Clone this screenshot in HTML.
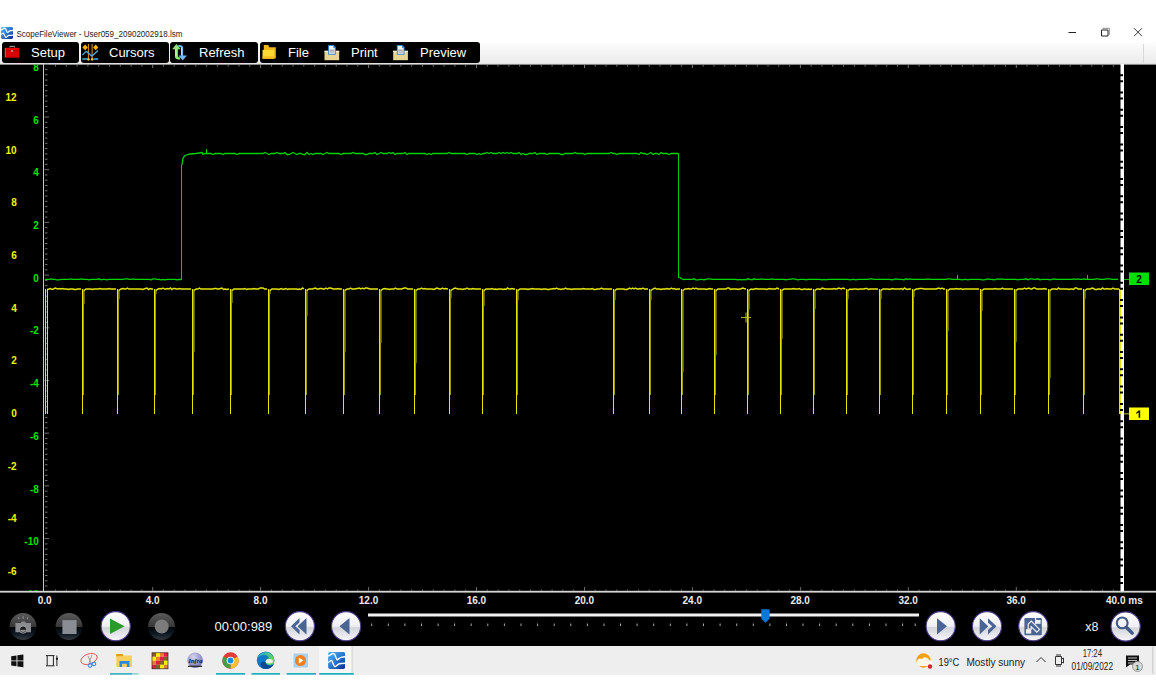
<!DOCTYPE html>
<html><head><meta charset="utf-8">
<style>
*{margin:0;padding:0;box-sizing:border-box}
html,body{width:1156px;height:700px;overflow:hidden;background:#fff;font-family:"Liberation Sans",sans-serif}
.abs{position:absolute}
#title{left:16px;top:28px;font-size:9px;color:#222;white-space:nowrap}
#tbar{left:0;top:41px;width:1156px;height:23px;background:linear-gradient(#ffffff,#f6f6f6 40%,#ebebeb)}
.btn{position:absolute;top:42px;height:21px;background:#000;border-radius:3px}
.bt{position:absolute;top:45px;font-size:13px;color:#fff;white-space:nowrap;line-height:15px}
#black{left:0;top:64px;width:1156px;height:582px;background:#000}
.yl{position:absolute;font-size:10px;font-weight:bold;line-height:10px;text-align:right;width:30px}
.g{color:#00e000}
.y{color:#f0f000}
.xl{position:absolute;top:595px;font-size:10px;font-weight:bold;color:#e8e8e8;line-height:10px;width:40px;text-align:center}
#taskbar{left:0;top:646px;width:1156px;height:29px;background:#eeeeee}
.ul{position:absolute;top:673px;height:2px;background:#1aa5b8}
</style></head><body>
<!-- title bar -->
<svg class="abs" style="left:1px;top:27px" width="12" height="12" viewBox="0 0 17 17">
<defs><linearGradient id="ig" x1="0" y1="0" x2="1" y2="1"><stop offset="0" stop-color="#58b8f4"/><stop offset="0.5" stop-color="#2a78d0"/><stop offset="1" stop-color="#0a2a90"/></linearGradient></defs>
<rect x="0" y="0" width="17" height="17" rx="2" fill="url(#ig)"/>
<path d="M0 4.1C2 3.8 4 1 5.8 1.7S8 7.8 9 7.8S12 5.3 13.6 5.2S17 4.8 17 4.8M0 10.5C1.5 10 2.5 8.3 3.4 8.5S5.5 14.8 6.8 14.8S9.5 12 11.4 11.9S17 11.4 17 11.4" fill="none" stroke="#fff" stroke-width="1.7"/>
</svg>
<svg class="abs" style="left:0;top:20px" width="300" height="22" viewBox="0 20 300 22"><text x="16.4" y="37.1" font-size="9.2" fill="#1a1a1a" font-family="Liberation Sans" textLength="166" lengthAdjust="spacingAndGlyphs">ScopeFileViewer - User059_20902002918.lsm</text></svg>
<svg class="abs" style="left:1066px;top:26px" width="80" height="14" viewBox="0 0 80 14">
<path d="M2.5 6.5h7.5" stroke="#222" stroke-width="1"/>
<path d="M35.5 4h6.5v6h-6.5z" fill="none" stroke="#222" stroke-width="1"/>
<path d="M37 3.8v-1.5h6.3v6.2h-1.3" fill="none" stroke="#888" stroke-width="1"/>
<path d="M68 2.2l8 8M76 2.2l-8 8" stroke="#222" stroke-width="0.9"/>
</svg>
<div id="tbar" class="abs"></div>
<div class="abs" style="left:1143px;top:44px;width:1px;height:20px;background:#d8d8d8"></div>
<!-- toolbar buttons -->
<div class="btn" style="left:2px;width:77px"></div>
<div class="btn" style="left:81px;width:88px"></div>
<div class="btn" style="left:170px;width:88px"></div>
<div class="btn" style="left:260px;width:220px"></div>
<div class="bt" style="left:31px">Setup</div>
<div class="bt" style="left:109px">Cursors</div>
<div class="bt" style="left:199px">Refresh</div>
<div class="bt" style="left:288px">File</div>
<div class="bt" style="left:351px">Print</div>
<div class="bt" style="left:420px">Preview</div>
<!-- toolbar icons -->
<svg class="abs" style="left:0;top:41px" width="480" height="23" viewBox="0 41 480 23">
<!-- toolbox -->
<path d="M10 47.6v-1.2h4.6v1.2" fill="none" stroke="#a8a8a8" stroke-width="1"/>
<path d="M5 47.8h14v2.6h-14z" fill="#f00000"/>
<path d="M5 50.3h14v7.4h-14z" fill="#d80000"/>
<path d="M5.2 48.2v9" stroke="#ff8080" stroke-width="0.7"/>
<circle cx="12" cy="51" r="0.9" fill="#bbb"/>
<!-- cursors -->
<path d="M88.4 44v16.5M92.1 44v16.5" stroke="#d88a10" stroke-width="1.1"/>
<path d="M85.2 44.6l2.6 2.8l-2.6 2.8l-2.8-2.8zM95.7 44.6l2.6 2.8l-2.6 2.8l-2.6-2.8z" fill="#ffb010"/>
<path d="M82.3 55.1L86.2 51.3L92 56.1L98 50.6" fill="none" stroke="#48b0e8" stroke-width="1.3"/>
<path d="M82.3 59h4.8M94.1 59h4.1" stroke="#48b0e8" stroke-width="1.6"/>
<circle cx="88.4" cy="59.2" r="1.3" fill="#ffc020"/><circle cx="92.2" cy="59.2" r="1.3" fill="#ffc020"/>
<!-- refresh -->
<path d="M176.4 44.1l-4.3 5.2h2.9v7.5c0 1.8 1.6 2.8 3.5 2.8h1.6v-2.2c-1.3 0-2.2-0.4-2.2-1.6v-6.5h2.9z" fill="#8ae870"/>
<path d="M175.9 49.3v7" stroke="#d8ffc8" stroke-width="0.9"/>
<path d="M178.3 44.9h1.4c1.9 0 3.4 1 3.4 2.8v7.7h3.8l-4.2 5.2l-4.2-5.2h2.7v-6.6c0-1.3-0.6-1.7-2.9-1.7z" fill="#70b8f8"/>
<path d="M181.6 48v7" stroke="#d8ecff" stroke-width="0.9"/>
<!-- folder -->
<path d="M263.8 45.1h4.5l1 2.1h6.5v11.3h-12z" fill="#f0b818"/>
<path d="M262.5 49.9h11.6v8.8h-11.6z" fill="#ffd830"/>
<path d="M262.5 56.5h11.6v2.2h-11.6z" fill="#f8b820"/>
<!-- print -->
<g transform="translate(0.0 0)">
<path d="M324.5 50.8h14.7v9.4h-14.7z" fill="#e6d594"/>
<path d="M324.5 50.8h14.7v1.2h-14.7z" fill="#f6f0d8"/>
<path d="M328.1 45.1h5.6l2.1 2.1v7.5h-7.7z" fill="#3a8ad8"/>
<path d="M329.1 46.1h4.2v2h1.5v5.6h-5.7z" fill="#eef2f6"/>
<path d="M329.6 50.2h4.6M329.6 52h4.6" stroke="#777" stroke-width="0.8"/>
</g>
<!-- preview -->
<g transform="translate(68.7 0)">
<path d="M324.5 50.8h14.7v9.4h-14.7z" fill="#e6d594"/>
<path d="M324.5 50.8h14.7v1.2h-14.7z" fill="#f6f0d8"/>
<path d="M328.1 45.1h5.6l2.1 2.1v7.5h-7.7z" fill="#3a8ad8"/>
<path d="M329.1 46.1h4.2v2h1.5v5.6h-5.7z" fill="#eef2f6"/>
<path d="M329.6 50.2h4.6M329.6 52h4.6" stroke="#777" stroke-width="0.8"/>
</g>
</svg>
<!-- main black -->
<div id="black" class="abs"></div>
<svg class="abs" style="left:0;top:0" width="1156" height="700" viewBox="0 0 1156 700">
<rect x="0" y="63" width="1156" height="1.6" fill="#e2e2e2"/>
<rect x="43" y="64" width="1" height="528" fill="#c8c8c8" shape-rendering="crispEdges"/>
<rect x="0" y="590.8" width="1156" height="1.8" fill="#d6d6d6"/>
<rect x="1120.5" y="64" width="3.5" height="527" fill="#fff"/>
<path d="M44.5 64.3h4.5 M45 69.6h2.5 M45 74.8h2.5 M45 80.1h2.5 M45 85.4h2.5 M45 90.7h2.5 M45 95.9h2.5 M45 101.2h2.5 M45 106.5h2.5 M45 111.7h2.5 M44.5 117.0h4.5 M45 122.3h2.5 M45 127.5h2.5 M45 132.8h2.5 M45 138.1h2.5 M45 143.3h2.5 M45 148.6h2.5 M45 153.9h2.5 M45 159.2h2.5 M45 164.4h2.5 M44.5 169.7h4.5 M45 175.0h2.5 M45 180.2h2.5 M45 185.5h2.5 M45 190.8h2.5 M45 196.1h2.5 M45 201.3h2.5 M45 206.6h2.5 M45 211.9h2.5 M45 217.1h2.5 M44.5 222.4h4.5 M45 227.7h2.5 M45 232.9h2.5 M45 238.2h2.5 M45 243.5h2.5 M45 248.8h2.5 M45 254.0h2.5 M45 259.3h2.5 M45 264.6h2.5 M45 269.8h2.5 M44.5 275.1h4.5 M45 280.4h2.5 M45 285.6h2.5 M45 290.9h2.5 M45 296.2h2.5 M45 301.4h2.5 M45 306.7h2.5 M45 312.0h2.5 M45 317.3h2.5 M45 322.5h2.5 M44.5 327.8h4.5 M45 333.1h2.5 M45 338.3h2.5 M45 343.6h2.5 M45 348.9h2.5 M45 354.2h2.5 M45 359.4h2.5 M45 364.7h2.5 M45 370.0h2.5 M45 375.2h2.5 M44.5 380.5h4.5 M45 385.8h2.5 M45 391.0h2.5 M45 396.3h2.5 M45 401.6h2.5 M45 406.9h2.5 M45 412.1h2.5 M45 417.4h2.5 M45 422.7h2.5 M45 427.9h2.5 M44.5 433.2h4.5 M45 438.5h2.5 M45 443.7h2.5 M45 449.0h2.5 M45 454.3h2.5 M45 459.6h2.5 M45 464.8h2.5 M45 470.1h2.5 M45 475.4h2.5 M45 480.6h2.5 M44.5 485.9h4.5 M45 491.2h2.5 M45 496.4h2.5 M45 501.7h2.5 M45 507.0h2.5 M45 512.2h2.5 M45 517.5h2.5 M45 522.8h2.5 M45 528.1h2.5 M45 533.3h2.5 M44.5 538.6h4.5 M45 543.9h2.5 M45 549.1h2.5 M45 554.4h2.5 M45 559.7h2.5 M45 564.9h2.5 M45 570.2h2.5 M45 575.5h2.5 M45 580.8h2.5 M45 586.0h2.5" stroke="#707070" stroke-width="1"/>
<path d="M55.5 65v1.5 M66.3 65v1.5 M77.1 65v1.5 M87.9 65v1.5 M98.7 65v1.5 M109.5 65v1.5 M120.3 65v1.5 M131.1 65v1.5 M141.9 65v1.5 M152.7 65v3 M163.4 65v1.5 M174.2 65v1.5 M185.0 65v1.5 M195.8 65v1.5 M206.6 65v1.5 M217.4 65v1.5 M228.2 65v1.5 M239.0 65v1.5 M249.8 65v1.5 M260.6 65v3 M271.4 65v1.5 M282.2 65v1.5 M293.0 65v1.5 M303.8 65v1.5 M314.6 65v1.5 M325.4 65v1.5 M336.2 65v1.5 M347.0 65v1.5 M357.8 65v1.5 M368.6 65v3 M379.3 65v1.5 M390.1 65v1.5 M400.9 65v1.5 M411.7 65v1.5 M422.5 65v1.5 M433.3 65v1.5 M444.1 65v1.5 M454.9 65v1.5 M465.7 65v1.5 M476.5 65v3 M487.3 65v1.5 M498.1 65v1.5 M508.9 65v1.5 M519.7 65v1.5 M530.5 65v1.5 M541.3 65v1.5 M552.1 65v1.5 M562.9 65v1.5 M573.7 65v1.5 M584.5 65v3 M595.2 65v1.5 M606.0 65v1.5 M616.8 65v1.5 M627.6 65v1.5 M638.4 65v1.5 M649.2 65v1.5 M660.0 65v1.5 M670.8 65v1.5 M681.6 65v1.5 M692.4 65v3 M703.2 65v1.5 M714.0 65v1.5 M724.8 65v1.5 M735.6 65v1.5 M746.4 65v1.5 M757.2 65v1.5 M768.0 65v1.5 M778.8 65v1.5 M789.6 65v1.5 M800.4 65v3 M811.1 65v1.5 M821.9 65v1.5 M832.7 65v1.5 M843.5 65v1.5 M854.3 65v1.5 M865.1 65v1.5 M875.9 65v1.5 M886.7 65v1.5 M897.5 65v1.5 M908.3 65v3 M919.1 65v1.5 M929.9 65v1.5 M940.7 65v1.5 M951.5 65v1.5 M962.3 65v1.5 M973.1 65v1.5 M983.9 65v1.5 M994.7 65v1.5 M1005.5 65v1.5 M1016.3 65v3 M1027.0 65v1.5 M1037.8 65v1.5 M1048.6 65v1.5 M1059.4 65v1.5 M1070.2 65v1.5 M1081.0 65v1.5 M1091.8 65v1.5 M1102.6 65v1.5 M1113.4 65v1.5" stroke="#777" stroke-width="1"/>
<path d="M55.5 591v-1.5 M66.3 591v-1.5 M77.1 591v-1.5 M87.9 591v-1.5 M98.7 591v-1.5 M109.5 591v-1.5 M120.3 591v-1.5 M131.1 591v-1.5 M141.9 591v-1.5 M152.7 591v-4 M163.4 591v-1.5 M174.2 591v-1.5 M185.0 591v-1.5 M195.8 591v-1.5 M206.6 591v-1.5 M217.4 591v-1.5 M228.2 591v-1.5 M239.0 591v-1.5 M249.8 591v-1.5 M260.6 591v-4 M271.4 591v-1.5 M282.2 591v-1.5 M293.0 591v-1.5 M303.8 591v-1.5 M314.6 591v-1.5 M325.4 591v-1.5 M336.2 591v-1.5 M347.0 591v-1.5 M357.8 591v-1.5 M368.6 591v-4 M379.3 591v-1.5 M390.1 591v-1.5 M400.9 591v-1.5 M411.7 591v-1.5 M422.5 591v-1.5 M433.3 591v-1.5 M444.1 591v-1.5 M454.9 591v-1.5 M465.7 591v-1.5 M476.5 591v-4 M487.3 591v-1.5 M498.1 591v-1.5 M508.9 591v-1.5 M519.7 591v-1.5 M530.5 591v-1.5 M541.3 591v-1.5 M552.1 591v-1.5 M562.9 591v-1.5 M573.7 591v-1.5 M584.5 591v-4 M595.2 591v-1.5 M606.0 591v-1.5 M616.8 591v-1.5 M627.6 591v-1.5 M638.4 591v-1.5 M649.2 591v-1.5 M660.0 591v-1.5 M670.8 591v-1.5 M681.6 591v-1.5 M692.4 591v-4 M703.2 591v-1.5 M714.0 591v-1.5 M724.8 591v-1.5 M735.6 591v-1.5 M746.4 591v-1.5 M757.2 591v-1.5 M768.0 591v-1.5 M778.8 591v-1.5 M789.6 591v-1.5 M800.4 591v-4 M811.1 591v-1.5 M821.9 591v-1.5 M832.7 591v-1.5 M843.5 591v-1.5 M854.3 591v-1.5 M865.1 591v-1.5 M875.9 591v-1.5 M886.7 591v-1.5 M897.5 591v-1.5 M908.3 591v-4 M919.1 591v-1.5 M929.9 591v-1.5 M940.7 591v-1.5 M951.5 591v-1.5 M962.3 591v-1.5 M973.1 591v-1.5 M983.9 591v-1.5 M994.7 591v-1.5 M1005.5 591v-1.5 M1016.3 591v-4 M1027.0 591v-1.5 M1037.8 591v-1.5 M1048.6 591v-1.5 M1059.4 591v-1.5 M1070.2 591v-1.5 M1081.0 591v-1.5 M1091.8 591v-1.5 M1102.6 591v-1.5 M1113.4 591v-1.5" stroke="#6a6a6a" stroke-width="1"/>
<path d="M47 289.5L49 289.0L50.5 288.5L52.0 289.5L53.5 289.0L55.0 288.0L56.5 288.5L58.0 289.0L59.5 288.5L61.0 289.0L62.5 288.5L64.0 289.0L65.5 289.0L67.0 289.0L68.5 289.5L70.0 289.0L71.5 289.0L73.0 289.0L74.5 289.5L76.0 289.5L77.5 289.0L79.0 289.0L81 289.0M84 290.5L86 289.0L88 289.0L89.5 289.0L91.0 289.0L92.5 289.5L94.0 289.0L95.5 289.0L97.0 289.0L98.5 289.0L100.0 288.5L101.5 289.0L103.0 289.0L104.5 289.0L106.0 289.0L107.5 289.0L109.0 288.5L110.5 289.0L112.0 289.0L113.5 289.0L116 289.0M119 290.5L121 289.0L123 288.5L124.5 289.0L126.0 289.0L127.5 288.0L129.0 289.0L130.5 289.0L132.0 289.0L133.5 289.0L135.0 289.0L136.5 289.0L138.0 289.0L139.5 289.0L141.0 289.0L142.5 289.5L144.0 289.0L145.5 288.5L147.0 288.0L148.5 289.5L150.0 288.5L151.5 289.0L153 289.0M156 290.5L158 289.0L160 288.5L161.5 289.0L163.0 288.0L164.5 289.0L166.0 289.0L167.5 288.5L169.0 289.0L170.5 288.0L172.0 289.5L173.5 288.5L175.0 288.5L176.5 289.0L178.0 289.0L179.5 288.5L181.0 289.0L182.5 289.0L184.0 289.0L185.5 289.0L187.0 289.0L188.5 289.0L191 289.0M194 290.5L196 289.0L198 289.0L199.5 288.0L201.0 289.0L202.5 289.0L204.0 289.0L205.5 289.0L207.0 289.0L208.5 289.0L210.0 289.0L211.5 289.0L213.0 289.0L214.5 288.5L216.0 288.5L217.5 289.0L219.0 289.0L220.5 288.5L222.0 288.0L223.5 289.5L225.0 289.0L226.5 289.5L229 289.0M232 290.5L234 289.0L236 289.0L237.5 289.0L239.0 289.0L240.5 289.0L242.0 289.0L243.5 289.0L245.0 288.5L246.5 289.5L248.0 289.0L249.5 289.0L251.0 289.0L252.5 289.0L254.0 288.5L255.5 289.0L257.0 289.0L258.5 289.0L260.0 288.0L261.5 288.0L263.0 288.0L264.5 289.0L267 289.0M270 290.5L272 289.0L274 289.0L275.5 289.0L277.0 289.0L278.5 289.5L280.0 289.0L281.5 288.5L283.0 289.5L284.5 289.0L286.0 288.5L287.5 289.5L289.0 289.0L290.5 289.0L292.0 289.0L293.5 289.0L295.0 289.0L296.5 289.0L298.0 289.5L299.5 289.0L301.0 289.5L302.5 288.0L304 289.0M307 290.5L309 289.0L311 289.0L312.5 289.0L314.0 288.5L315.5 288.0L317.0 289.0L318.5 289.0L320.0 288.5L321.5 288.5L323.0 289.0L324.5 289.0L326.0 288.0L327.5 289.0L329.0 288.0L330.5 288.0L332.0 288.5L333.5 289.0L335.0 289.0L336.5 289.0L338.0 288.5L339.5 289.0L342 289.0M345 290.5L347 289.0L349 289.0L350.5 288.0L352.0 289.0L353.5 289.0L355.0 289.0L356.5 288.5L358.0 288.5L359.5 288.0L361.0 289.0L362.5 288.0L364.0 289.0L365.5 288.0L367.0 288.0L368.5 288.5L370.0 289.0L371.5 289.0L373.0 289.0L374.5 289.0L376.0 289.0L378 289.0M381 290.5L383 289.0L385 288.5L386.5 289.0L388.0 289.0L389.5 289.5L391.0 289.0L392.5 289.0L394.0 289.0L395.5 288.0L397.0 289.0L398.5 289.0L400.0 289.0L401.5 289.0L403.0 288.5L404.5 288.0L406.0 288.0L407.5 289.0L409.0 289.0L410.5 289.0L413 289.0M416 290.5L418 289.0L420 289.0L421.5 288.0L423.0 289.0L424.5 288.5L426.0 289.0L427.5 289.0L429.0 289.0L430.5 289.0L432.0 289.0L433.5 289.5L435.0 289.0L436.5 288.0L438.0 288.5L439.5 289.0L441.0 289.0L442.5 288.0L444.0 289.0L445.5 288.5L448 289.0M451 290.5L453 289.0L455 288.0L456.5 288.5L458.0 289.0L459.5 289.0L461.0 289.0L462.5 289.5L464.0 289.0L465.5 289.0L467.0 288.0L468.5 289.0L470.0 289.0L471.5 289.0L473.0 288.5L474.5 289.0L476.0 289.0L477.5 289.0L479.0 289.0L481 289.0M484 290.5L486 289.0L488 289.0L489.5 289.0L491.0 289.0L492.5 288.5L494.0 289.5L495.5 289.0L497.0 289.5L498.5 289.0L500.0 289.0L501.5 289.0L503.0 289.5L504.5 289.0L506.0 289.5L507.5 288.0L509.0 289.0L510.5 289.0L512.0 288.5L513.5 289.0L515 289.0M518 290.5L520 289.0L522 289.0L523.5 289.0L525.0 289.0L526.5 289.0L528.0 289.5L529.5 289.0L531.0 289.0L532.5 288.5L534.0 289.0L535.5 289.0L537.0 289.0L538.5 289.0L540.0 289.0L541.5 289.5L543.0 289.0L544.5 289.0L546.0 289.0L547.5 289.5L549.0 289.5L550.5 289.0L552.0 289.0L553.5 288.5L555.0 289.0L556.5 288.0L558.0 289.0L559.5 289.0L561.0 289.5L562.5 289.0L564.0 289.0L565.5 288.0L567.0 289.0L568.5 289.0L570.0 289.0L571.5 289.5L573.0 289.0L574.5 289.0L576.0 289.0L577.5 289.0L579.0 289.0L580.5 289.0L582.0 289.0L583.5 288.5L585.0 289.0L586.5 289.0L588.0 289.0L589.5 289.0L591.0 289.0L592.5 288.5L594.0 289.5L595.5 289.5L597.0 289.0L598.5 289.0L600.0 289.0L601.5 288.0L603.0 289.0L604.5 289.0L606.0 289.0L607.5 289.0L609.0 289.0L610.5 289.0L612 289.0M615 290.5L617 289.0L619 289.0L620.5 289.0L622.0 289.0L623.5 289.0L625.0 289.5L626.5 289.5L628.0 289.0L629.5 288.0L631.0 289.0L632.5 288.0L634.0 289.0L635.5 288.0L637.0 289.0L638.5 289.0L640.0 288.5L641.5 289.0L643.0 288.0L644.5 289.0L646.0 289.0L648 289.0M651 290.5L653 289.0L655 288.0L656.5 289.0L658.0 289.0L659.5 289.0L661.0 289.5L662.5 289.0L664.0 289.0L665.5 289.0L667.0 288.5L668.5 289.0L670.0 289.0L671.5 288.0L673.0 289.0L674.5 288.5L676.0 289.5L677.5 289.0L680 289.0M683 290.5L685 289.0L687 289.0L688.5 288.5L690.0 289.0L691.5 289.0L693.0 288.0L694.5 289.0L696.0 288.0L697.5 289.0L699.0 289.0L700.5 289.0L702.0 289.0L703.5 289.0L705.0 289.0L706.5 289.5L708.0 289.0L709.5 288.5L711.0 289.0L713 289.0M716 290.5L718 289.0L720 289.0L721.5 289.0L723.0 289.0L724.5 289.0L726.0 289.0L727.5 288.0L729.0 288.0L730.5 289.5L732.0 289.0L733.5 289.0L735.0 289.0L736.5 289.0L738.0 289.5L739.5 289.0L741.0 289.0L742.5 288.0L744.0 288.5L746 289.0M749 290.5L751 289.0L753 289.5L754.5 289.0L756.0 288.5L757.5 289.0L759.0 289.0L760.5 289.0L762.0 289.0L763.5 289.0L765.0 289.0L766.5 289.5L768.0 289.0L769.5 288.5L771.0 289.0L772.5 289.0L774.0 289.0L775.5 289.0L777.0 288.0L779 289.0M782 290.5L784 289.0L786 289.0L787.5 289.0L789.0 289.0L790.5 289.0L792.0 289.0L793.5 288.5L795.0 289.0L796.5 289.0L798.0 289.0L799.5 288.5L801.0 289.5L802.5 289.5L804.0 289.0L805.5 289.0L807.0 289.5L808.5 289.0L810.0 289.5L812 289.0M815 290.5L817 289.0L819 289.0L820.5 289.5L822.0 288.0L823.5 288.5L825.0 289.0L826.5 289.0L828.0 289.0L829.5 289.0L831.0 289.0L832.5 289.0L834.0 288.5L835.5 289.0L837.0 289.0L838.5 288.0L840.0 288.5L841.5 289.0L843.0 288.0L845 289.0M848 290.5L850 289.0L852 289.5L853.5 289.0L855.0 289.0L856.5 289.0L858.0 289.5L859.5 289.0L861.0 289.0L862.5 289.0L864.0 289.0L865.5 288.5L867.0 288.5L868.5 289.5L870.0 289.0L871.5 289.0L873.0 289.0L874.5 289.0L876.0 289.0L878 289.0M881 290.5L883 289.0L885 289.0L886.5 289.0L888.0 289.0L889.5 289.5L891.0 289.0L892.5 288.5L894.0 289.0L895.5 289.0L897.0 289.0L898.5 289.0L900.0 289.0L901.5 288.5L903.0 289.5L904.5 288.0L906.0 289.0L907.5 289.5L909.0 289.0L911 289.0M914 290.5L916 289.0L918 289.0L919.5 288.5L921.0 288.5L922.5 288.5L924.0 289.0L925.5 289.0L927.0 289.0L928.5 289.0L930.0 289.0L931.5 289.0L933.0 289.0L934.5 289.0L936.0 289.0L937.5 288.5L939.0 288.0L940.5 289.0L942.0 288.0L943.5 289.0L945 289.0M948 290.5L950 289.0L952 289.0L953.5 289.0L955.0 289.0L956.5 288.5L958.0 289.0L959.5 289.0L961.0 288.5L962.5 289.5L964.0 289.0L965.5 289.0L967.0 289.0L968.5 289.0L970.0 289.0L971.5 289.0L973.0 289.0L974.5 289.0L976.0 289.0L977.5 289.0L979 289.0M982 290.5L984 289.0L986 289.0L987.5 289.0L989.0 289.0L990.5 289.0L992.0 289.0L993.5 289.0L995.0 288.5L996.5 289.0L998.0 289.0L999.5 289.0L1001.0 289.0L1002.5 288.0L1004.0 289.0L1005.5 289.0L1007.0 289.0L1008.5 289.0L1010.0 289.0L1011.5 289.0L1013 289.0M1016 290.5L1018 289.0L1020 289.0L1021.5 289.0L1023.0 289.0L1024.5 288.0L1026.0 289.0L1027.5 288.5L1029.0 288.0L1030.5 289.0L1032.0 289.0L1033.5 288.0L1035.0 288.0L1036.5 289.0L1038.0 289.0L1039.5 289.0L1041.0 289.0L1042.5 289.0L1044.0 288.5L1045.5 289.0L1047 289.0M1050 290.5L1052 289.0L1054 289.0L1055.5 289.0L1057.0 289.5L1058.5 288.0L1060.0 289.0L1061.5 289.0L1063.0 289.0L1064.5 289.0L1066.0 289.0L1067.5 289.0L1069.0 289.5L1070.5 289.0L1072.0 289.0L1073.5 289.5L1075.0 288.0L1076.5 288.0L1078.0 289.0L1079.5 289.0L1082 289.0M1085 290.5L1087 289.0L1089 289.0L1090.5 289.0L1092.0 288.0L1093.5 288.5L1095.0 289.5L1096.5 289.5L1098.0 289.0L1099.5 289.0L1101.0 289.5L1102.5 288.0L1104.0 289.0L1105.5 289.0L1107.0 288.5L1108.5 289.0L1110.0 289.0L1111.5 289.0L1113.0 288.0L1114.5 289.0L1116.0 289.0L1117.5 289.0L1119 289.0" fill="none" stroke="#e6e600" stroke-width="1.4"/>
<path d="M82 288.5h1v125.5h-1z M117 288.5h1v125.5h-1z M154 288.5h1v125.5h-1z M192 288.5h1v125.5h-1z M230 288.5h1v125.5h-1z M268 288.5h1v125.5h-1z M305 288.5h1v125.5h-1z M343 288.5h1v125.5h-1z M379 288.5h1v125.5h-1z M414 288.5h1v125.5h-1z M449 288.5h1v125.5h-1z M482 288.5h1v125.5h-1z M516 288.5h1v125.5h-1z M613 288.5h1v125.5h-1z M649 288.5h1v125.5h-1z M681 288.5h1v125.5h-1z M714 288.5h1v125.5h-1z M747 288.5h1v125.5h-1z M780 288.5h1v125.5h-1z M813 288.5h1v125.5h-1z M846 288.5h1v125.5h-1z M879 288.5h1v125.5h-1z M912 288.5h1v125.5h-1z M946 288.5h1v125.5h-1z M980 288.5h1v125.5h-1z M1014 288.5h1v125.5h-1z M1048 288.5h1v125.5h-1z M1083 288.5h1v125.5h-1z M45 288.5h1v125.5h-1z M47 288.5h1v125.5h-1z M1119 288.5h2v125.5h-2z" fill="#e6e600" shape-rendering="crispEdges"/>
<path d="M83 304h1v91.0h-1z M118 299h1v96.0h-1z M155 294h1v101.0h-1z M193 352h1v43.0h-1z M231 303h1v92.0h-1z M269 294h1v101.0h-1z M306 316h1v79.0h-1z M344 352h1v43.0h-1z M380 343h1v52.0h-1z M415 363h1v32.0h-1z M450 298h1v97.0h-1z M483 306h1v89.0h-1z M517 300h1v95.0h-1z M614 300h1v95.0h-1z M650 300h1v95.0h-1z M682 372h1v23.0h-1z M715 355h1v40.0h-1z M748 309h1v86.0h-1z M781 339h1v56.0h-1z M814 309h1v86.0h-1z M847 299h1v96.0h-1z M880 299h1v96.0h-1z M913 297h1v98.0h-1z M947 331h1v64.0h-1z M981 311h1v84.0h-1z M1015 342h1v53.0h-1z M1049 378h1v17.0h-1z M1084 299h1v96.0h-1z" fill="#9a9a00" shape-rendering="crispEdges"/>
<path d="M83.4 289.5h1v14.5h-1z M118.4 289.5h1v9.5h-1z M155.4 289.5h1v4.5h-1z M193.4 289.5h1v62.5h-1z M231.4 289.5h1v13.5h-1z M269.4 289.5h1v4.5h-1z M306.4 289.5h1v26.5h-1z M344.4 289.5h1v62.5h-1z M380.4 289.5h1v53.5h-1z M415.4 289.5h1v73.5h-1z M450.4 289.5h1v8.5h-1z M483.4 289.5h1v16.5h-1z M517.4 289.5h1v10.5h-1z M614.4 289.5h1v10.5h-1z M650.4 289.5h1v10.5h-1z M682.4 289.5h1v82.5h-1z M715.4 289.5h1v65.5h-1z M748.4 289.5h1v19.5h-1z M781.4 289.5h1v49.5h-1z M814.4 289.5h1v19.5h-1z M847.4 289.5h1v9.5h-1z M880.4 289.5h1v9.5h-1z M913.4 289.5h1v7.5h-1z M947.4 289.5h1v41.5h-1z M981.4 289.5h1v21.5h-1z M1015.4 289.5h1v52.5h-1z M1049.4 289.5h1v88.5h-1z M1084.4 289.5h1v9.5h-1z" fill="#e6e600"/>
<path d="M45 279.3L47 279.3L49 279.3L51 278.8L53 279.3L55 279.3L57 279.8L59 279.8L61 279.3L63 279.3L65 279.3L67 279.3L69 279.3L71 278.8L73 279.3L75 279.3L77 279.3L79 279.3L81 278.8L83 279.3L85 279.3L87 279.3L89 279.8L91 279.3L93 279.3L95 279.3L97 279.3L99 278.8L101 279.8L103 279.3L105 279.3L107 279.8L109 279.3L111 279.3L113 279.3L115 279.3L117 279.3L119 279.3L121 279.3L123 279.3L125 278.8L127 278.8L129 279.3L131 279.3L133 278.8L135 279.3L137 279.3L139 279.3L141 279.3L143 279.3L145 279.3L147 279.3L149 279.3L151 279.8L153 278.8L155 278.8L157 279.3L159 279.3L161 279.8L163 279.3L165 279.8L167 279.3L169 279.3L171 279.3L173 279.3L175 279.3L177 279.8L179 279.3L181 279.5M182 165L183 158L185 155.5L190 154L196 153.5L202 152.5L203 154.5L205 153.5L207 153.5L209 153.5L211 153.5L213 154.5L215 153.5L217 153.5L219 153.5L221 153.5L223 154.5L225 153.5L227 153.5L229 153.5L231 153.5L233 153.5L235 153.5L237 154.5L239 153.5L241 153.5L243 153.5L245 153.5L247 153.5L249 153.5L251 153.5L253 153.5L255 153.5L257 153.5L259 153.5L261 153.5L263 153.5L265 152.5L267 153.5L269 154.5L271 153.5L273 153.5L275 153.5L277 152.5L279 153.5L281 153.5L283 153.5L285 152.5L287 154.5L289 154.5L291 153.5L293 152.5L295 153.5L297 154.5L299 153.5L301 153.5L303 154.5L305 154.5L307 152.5L309 154.5L311 153.5L313 154.5L315 153.5L317 153.5L319 153.5L321 153.5L323 154.5L325 153.5L327 152.5L329 153.5L331 153.5L333 153.5L335 153.5L337 153.5L339 153.5L341 154.5L343 153.5L345 153.5L347 153.5L349 153.5L351 153.5L353 152.5L355 153.5L357 153.5L359 153.5L361 153.5L363 153.5L365 154.5L367 154.5L369 153.5L371 153.5L373 153.5L375 152.5L377 154.5L379 153.5L381 152.5L383 153.5L385 153.5L387 153.5L389 152.5L391 153.5L393 152.5L395 154.5L397 153.5L399 153.5L401 153.5L403 153.5L405 152.5L407 154.5L409 153.5L411 153.5L413 153.5L415 153.5L417 153.5L419 153.5L421 153.5L423 153.5L425 153.5L427 154.5L429 153.5L431 154.5L433 153.5L435 153.5L437 153.5L439 153.5L441 153.5L443 153.5L445 153.5L447 153.5L449 152.5L451 153.5L453 153.5L455 153.5L457 153.5L459 153.5L461 153.5L463 153.5L465 153.5L467 154.5L469 153.5L471 153.5L473 153.5L475 153.5L477 154.5L479 153.5L481 154.5L483 153.5L485 153.5L487 152.5L489 153.5L491 152.5L493 153.5L495 153.5L497 153.5L499 152.5L501 153.5L503 152.5L505 153.5L507 152.5L509 153.5L511 152.5L513 153.5L515 153.5L517 153.5L519 152.5L521 154.5L523 153.5L525 154.5L527 154.5L529 153.5L531 153.5L533 153.5L535 152.5L537 154.5L539 153.5L541 153.5L543 153.5L545 153.5L547 154.5L549 153.5L551 153.5L553 153.5L555 153.5L557 153.5L559 153.5L561 154.5L563 154.5L565 153.5L567 153.5L569 153.5L571 153.5L573 153.5L575 152.5L577 153.5L579 153.5L581 153.5L583 153.5L585 154.5L587 153.5L589 153.5L591 153.5L593 153.5L595 153.5L597 153.5L599 153.5L601 153.5L603 153.5L605 153.5L607 153.5L609 153.5L611 152.5L613 153.5L615 153.5L617 154.5L619 153.5L621 153.5L623 153.5L625 153.5L627 153.5L629 153.5L631 153.5L633 153.5L635 153.5L637 153.5L639 154.5L641 152.5L643 153.5L645 153.5L647 154.5L649 153.5L651 152.5L653 154.5L655 153.5L657 153.5L659 154.5L661 152.5L663 153.5L665 153.5L667 153.5L669 154.5L671 153.5L673 153.5L675 153.5L678 153.5M679.5 277L681 278.5L684 279.5L686 279.3L688 279.3L690 279.3L692 279.3L694 278.8L696 279.8L698 279.8L700 279.3L702 279.3L704 279.8L706 279.3L708 278.8L710 278.8L712 279.3L714 279.3L716 279.3L718 279.3L720 279.3L722 279.3L724 279.3L726 279.3L728 279.3L730 279.3L732 279.3L734 279.3L736 279.3L738 279.8L740 279.3L742 279.8L744 279.3L746 279.8L748 278.8L750 279.3L752 279.8L754 278.8L756 279.3L758 279.3L760 279.3L762 278.8L764 279.3L766 279.3L768 279.3L770 279.3L772 278.8L774 279.3L776 279.3L778 279.3L780 279.3L782 279.3L784 279.3L786 279.8L788 279.3L790 279.3L792 278.8L794 278.8L796 279.3L798 279.8L800 279.3L802 279.3L804 279.3L806 279.8L808 279.3L810 279.3L812 279.3L814 279.3L816 279.3L818 279.3L820 279.3L822 279.8L824 279.3L826 279.8L828 279.3L830 279.3L832 279.3L834 279.3L836 279.3L838 279.3L840 279.3L842 279.3L844 279.3L846 279.3L848 279.3L850 279.8L852 279.3L854 279.3L856 279.8L858 279.3L860 279.3L862 279.3L864 279.3L866 279.3L868 279.3L870 278.8L872 278.8L874 279.3L876 279.3L878 279.3L880 279.3L882 279.3L884 279.3L886 279.3L888 279.3L890 279.3L892 279.8L894 279.3L896 278.8L898 279.3L900 279.3L902 279.3L904 279.8L906 278.8L908 279.3L910 278.8L912 279.3L914 279.3L916 279.3L918 279.3L920 279.3L922 279.3L924 279.3L926 279.3L928 278.8L930 279.3L932 279.3L934 279.3L936 279.3L938 279.3L940 279.3L942 279.3L944 279.3L946 279.3L948 278.8L950 278.8L952 279.3L954 279.3L956 279.3L958 279.3L960 279.3L962 279.8L964 279.3L966 279.3L968 279.8L970 279.3L972 279.3L974 279.3L976 279.3L978 279.3L980 279.3L982 279.8L984 279.8L986 279.3L988 278.8L990 279.3L992 279.3L994 279.8L996 279.3L998 278.8L1000 279.3L1002 278.8L1004 279.3L1006 279.3L1008 279.3L1010 279.3L1012 279.3L1014 279.3L1016 279.3L1018 279.8L1020 279.3L1022 279.3L1024 279.3L1026 278.8L1028 279.8L1030 278.8L1032 278.8L1034 279.3L1036 279.3L1038 278.8L1040 279.8L1042 279.3L1044 279.3L1046 279.3L1048 279.3L1050 279.8L1052 279.3L1054 278.8L1056 279.3L1058 279.3L1060 279.3L1062 279.3L1064 279.3L1066 279.3L1068 279.3L1070 279.3L1072 279.3L1074 278.8L1076 279.3L1078 278.8L1080 279.3L1082 279.3L1084 278.8L1086 279.3L1088 279.3L1090 279.3L1092 279.3L1094 279.3L1096 278.8L1098 278.8L1100 279.3L1102 279.3L1104 279.3L1106 278.8L1108 278.8L1110 278.8L1112 279.3L1114 279.3L1116 279.3L1118 279.3" fill="none" stroke="#00d400" stroke-width="1.3"/>
<path d="M181 165h1v115h-1zM678 153h1v125h-1zM206 149h1v4h-1zM957 275h1v4h-1zM1087 275h1v4h-1z" fill="#00d000" shape-rendering="crispEdges"/>
<path d="M371.7 623.5v2.5 M388.3 623.5v2.5 M404.9 623.5v2.5 M421.5 623.5v2.5 M438.1 623.5v2.5 M454.6 623.5v2.5 M471.2 623.5v2.5 M487.8 623.5v2.5 M504.4 623.5v2.5 M521.0 623.5v2.5 M537.6 623.5v2.5 M554.2 623.5v2.5 M570.8 623.5v2.5 M587.4 623.5v2.5 M604.0 623.5v2.5 M620.5 623.5v2.5 M637.1 623.5v2.5 M653.7 623.5v2.5 M670.3 623.5v2.5 M686.9 623.5v2.5 M703.5 623.5v2.5 M720.1 623.5v2.5 M736.7 623.5v2.5 M753.3 623.5v2.5 M769.9 623.5v2.5 M786.5 623.5v2.5 M803.0 623.5v2.5 M819.6 623.5v2.5 M836.2 623.5v2.5 M852.8 623.5v2.5 M869.4 623.5v2.5 M886.0 623.5v2.5 M902.6 623.5v2.5 M915.2 623.5v2.5" stroke="#aaaaaa" stroke-width="1"/>
<path d="M1120 74.2h3v2h-3z M1120 80.2h3v2h-3z M1120 91.5h3v2h-3z M1120 97.5h3v2h-3z M1120 108.8h3v2h-3z M1120 114.8h3v2h-3z M1120 126.1h3v2h-3z M1120 132.1h3v2h-3z M1120 143.4h3v2h-3z M1120 149.4h3v2h-3z M1120 160.7h3v2h-3z M1120 166.7h3v2h-3z M1120 178.0h3v2h-3z M1120 184.0h3v2h-3z M1120 195.3h3v2h-3z M1120 201.3h3v2h-3z M1120 212.6h3v2h-3z M1120 218.6h3v2h-3z M1120 229.9h3v2h-3z M1120 235.9h3v2h-3z M1120 247.2h3v2h-3z M1120 253.2h3v2h-3z M1120 264.5h3v2h-3z M1120 270.5h3v2h-3z M1120 281.8h3v2h-3z M1120 287.8h3v2h-3z M1120 299.1h3v2h-3z M1120 305.1h3v2h-3z M1120 316.4h3v2h-3z M1120 322.4h3v2h-3z M1120 333.7h3v2h-3z M1120 339.7h3v2h-3z M1120 351.0h3v2h-3z M1120 357.0h3v2h-3z M1120 368.3h3v2h-3z M1120 374.3h3v2h-3z M1120 385.6h3v2h-3z M1120 391.6h3v2h-3z M1120 402.9h3v2h-3z M1120 408.9h3v2h-3z M1120 420.2h3v2h-3z M1120 426.2h3v2h-3z M1120 437.5h3v2h-3z M1120 443.5h3v2h-3z M1120 454.8h3v2h-3z M1120 460.8h3v2h-3z M1120 472.1h3v2h-3z M1120 478.1h3v2h-3z M1120 489.4h3v2h-3z M1120 495.4h3v2h-3z M1120 506.7h3v2h-3z M1120 512.7h3v2h-3z M1120 524.0h3v2h-3z M1120 530.0h3v2h-3z M1120 541.3h3v2h-3z M1120 547.3h3v2h-3z M1120 558.6h3v2h-3z M1120 564.6h3v2h-3z M1120 575.9h3v2h-3z M1120 581.9h3v2h-3z" fill="#000"/>
<!-- cursor cross -->
<path d="M741 317.5h10M746 312.5v10" stroke="#b8b800" stroke-width="1"/>
<!-- markers -->
<rect x="1129" y="272.5" width="20" height="12.5" fill="#00e000"/>
<rect x="1129" y="407.5" width="20" height="12.5" fill="#ffff00"/>
<path d="M1124 279.5h5" stroke="#00c000" stroke-width="1"/><path d="M1124 413.8h5" stroke="#a8a800" stroke-width="1.2"/>
<text x="1139" y="282.5" font-size="10" font-weight="bold" text-anchor="middle" fill="#000" font-family="Liberation Sans">2</text>
<path d="M1138.6 410.6h1.6v7.2h-1.6zM1138.6 410.6l-2.3 1.8v1.6l2.3-1.5z" fill="#111"/>
</svg>
<svg class="abs" style="left:0;top:0" width="1156" height="700" viewBox="0 0 1156 700"><defs><clipPath id="lc"><rect x="0" y="64.6" width="1156" height="526.2"/></clipPath></defs><g clip-path="url(#lc)">
<text x="38.8" y="70.9" font-size="10" font-weight="bold" text-anchor="end" fill="#00e400" font-family="Liberation Sans">8</text>
<text x="38.8" y="123.6" font-size="10" font-weight="bold" text-anchor="end" fill="#00e400" font-family="Liberation Sans">6</text>
<text x="38.8" y="176.3" font-size="10" font-weight="bold" text-anchor="end" fill="#00e400" font-family="Liberation Sans">4</text>
<text x="38.8" y="229.0" font-size="10" font-weight="bold" text-anchor="end" fill="#00e400" font-family="Liberation Sans">2</text>
<text x="38.8" y="281.7" font-size="10" font-weight="bold" text-anchor="end" fill="#00e400" font-family="Liberation Sans">0</text>
<text x="38.8" y="334.4" font-size="10" font-weight="bold" text-anchor="end" fill="#00e400" font-family="Liberation Sans">-2</text>
<text x="38.8" y="387.1" font-size="10" font-weight="bold" text-anchor="end" fill="#00e400" font-family="Liberation Sans">-4</text>
<text x="38.8" y="439.8" font-size="10" font-weight="bold" text-anchor="end" fill="#00e400" font-family="Liberation Sans">-6</text>
<text x="38.8" y="492.5" font-size="10" font-weight="bold" text-anchor="end" fill="#00e400" font-family="Liberation Sans">-8</text>
<text x="38.8" y="545.2" font-size="10" font-weight="bold" text-anchor="end" fill="#00e400" font-family="Liberation Sans">-10</text>
<text x="38.8" y="597.9" font-size="10" font-weight="bold" text-anchor="end" fill="#00e400" font-family="Liberation Sans">-12</text>
<text x="16.7" y="101.1" font-size="10" font-weight="bold" text-anchor="end" fill="#f2f200" font-family="Liberation Sans">12</text>
<text x="16.7" y="153.8" font-size="10" font-weight="bold" text-anchor="end" fill="#f2f200" font-family="Liberation Sans">10</text>
<text x="16.7" y="206.4" font-size="10" font-weight="bold" text-anchor="end" fill="#f2f200" font-family="Liberation Sans">8</text>
<text x="16.7" y="259.0" font-size="10" font-weight="bold" text-anchor="end" fill="#f2f200" font-family="Liberation Sans">6</text>
<text x="16.7" y="311.7" font-size="10" font-weight="bold" text-anchor="end" fill="#f2f200" font-family="Liberation Sans">4</text>
<text x="16.7" y="364.4" font-size="10" font-weight="bold" text-anchor="end" fill="#f2f200" font-family="Liberation Sans">2</text>
<text x="16.7" y="417.0" font-size="10" font-weight="bold" text-anchor="end" fill="#f2f200" font-family="Liberation Sans">0</text>
<text x="16.7" y="469.6" font-size="10" font-weight="bold" text-anchor="end" fill="#f2f200" font-family="Liberation Sans">-2</text>
<text x="16.7" y="522.3" font-size="10" font-weight="bold" text-anchor="end" fill="#f2f200" font-family="Liberation Sans">-4</text>
<text x="16.7" y="574.9" font-size="10" font-weight="bold" text-anchor="end" fill="#f2f200" font-family="Liberation Sans">-6</text>
</g><g>
<text x="44.6" y="603.5" font-size="10" font-weight="bold" text-anchor="middle" fill="#ececec" font-family="Liberation Sans">0.0</text>
<text x="152.6" y="603.5" font-size="10" font-weight="bold" text-anchor="middle" fill="#ececec" font-family="Liberation Sans">4.0</text>
<text x="260.5" y="603.5" font-size="10" font-weight="bold" text-anchor="middle" fill="#ececec" font-family="Liberation Sans">8.0</text>
<text x="368.5" y="603.5" font-size="10" font-weight="bold" text-anchor="middle" fill="#ececec" font-family="Liberation Sans">12.0</text>
<text x="476.4" y="603.5" font-size="10" font-weight="bold" text-anchor="middle" fill="#ececec" font-family="Liberation Sans">16.0</text>
<text x="584.4" y="603.5" font-size="10" font-weight="bold" text-anchor="middle" fill="#ececec" font-family="Liberation Sans">20.0</text>
<text x="692.3" y="603.5" font-size="10" font-weight="bold" text-anchor="middle" fill="#ececec" font-family="Liberation Sans">24.0</text>
<text x="800.2" y="603.5" font-size="10" font-weight="bold" text-anchor="middle" fill="#ececec" font-family="Liberation Sans">28.0</text>
<text x="908.2" y="603.5" font-size="10" font-weight="bold" text-anchor="middle" fill="#ececec" font-family="Liberation Sans">32.0</text>
<text x="1016.2" y="603.5" font-size="10" font-weight="bold" text-anchor="middle" fill="#ececec" font-family="Liberation Sans">36.0</text>
</g>
<text x="1106" y="603.5" font-size="10" font-weight="bold" fill="#ececec" font-family="Liberation Sans">40.0 ms</text>
</svg>
<!-- controls -->
<svg class="abs" style="left:0;top:0" width="1156" height="700" viewBox="0 0 1156 700">
<defs>
<linearGradient id="gb" x1="0" y1="0" x2="0" y2="1">
<stop offset="0" stop-color="#ffffff"/><stop offset="0.5" stop-color="#f0f0f4"/><stop offset="0.55" stop-color="#d4d4dc"/><stop offset="1" stop-color="#f6f6fa"/></linearGradient>
<linearGradient id="db" x1="0" y1="0" x2="0" y2="1">
<stop offset="0" stop-color="#5a5a5a"/><stop offset="0.5" stop-color="#383838"/><stop offset="0.52" stop-color="#060606"/><stop offset="0.75" stop-color="#0a1622"/><stop offset="1" stop-color="#34383e"/></linearGradient>
</defs>
<circle cx="23" cy="626.5" r="13.4" fill="url(#db)"/>
<path d="M15.4 623h5.6l0.6-1.5h3.6l0.6 1.5h5.2v9.2h-15.6z" fill="#8a8c90"/><circle cx="23.1" cy="629.6" r="3.6" fill="#1a1a1a" stroke="#a0a2a6" stroke-width="1"/><path d="M20 629.8a3.2 3.2 0 0 0 6.2 0z" fill="#8a8c90"/><path d="M18 617.2l1.3 2M23.1 616.3v2.6M28.2 617.2l-1.3 2" stroke="#8a8c90" stroke-width="1.1"/>
<circle cx="69" cy="626.5" r="13.4" fill="url(#db)"/>
<rect x="62.4" y="620.1" width="14.2" height="13.9" fill="#8a8e94"/>
<circle cx="115.7" cy="626.2" r="14.6" fill="url(#gb)" stroke="#4b3a8a" stroke-width="1.1"/>
<path d="M110 618.5L124.5 626.3L110 634z" fill="#2a9a2a"/>
<circle cx="161.5" cy="626.5" r="13.4" fill="url(#db)"/>
<circle cx="161.7" cy="626.5" r="7" fill="#7c7c7c"/>
<text x="214.5" y="630.8" font-size="13" fill="#f4f4f4" font-family="Liberation Sans">00:00:989</text>
<circle cx="299.9" cy="626.2" r="14.6" fill="url(#gb)" stroke="#4b3a8a" stroke-width="1.1"/>
<path d="M291 626.3l8.5-8.2v4.5l-4.2 3.7l4.2 3.7v4.5z" fill="#4a6494"/><path d="M297.5 626.3l9-8.2v16.4z" fill="#4a6494"/>
<circle cx="346.1" cy="626.2" r="14.6" fill="url(#gb)" stroke="#4b3a8a" stroke-width="1.1"/>
<path d="M339.5 626.3l10-8.2v16.4z" fill="#4a6494"/>
<rect x="368" y="613.5" width="551" height="3" fill="#f2f2f2"/>
<path d="M761.3 609.3h8.3v9.5l-4.15 4l-4.15-4z" fill="#0a78d8"/>
<circle cx="940.7" cy="626.2" r="14.6" fill="url(#gb)" stroke="#4b3a8a" stroke-width="1.1"/>
<path d="M937 618.2l10 8.1l-10 8.1z" fill="#4a6494"/>
<circle cx="987" cy="626.2" r="14.6" fill="url(#gb)" stroke="#4b3a8a" stroke-width="1.1"/>
<path d="M979.7 618.2l8.5 8.1l-8.5 8.1z" fill="#4a6494"/><path d="M988 618.2l8.5 8.1l-8.5 8.1v-4.5l4.2-3.6l-4.2-3.6z" fill="#4a6494"/>
<circle cx="1033.3" cy="626.2" r="14.6" fill="url(#gb)" stroke="#4b3a8a" stroke-width="1.1"/>
<rect x="1024.4" y="618" width="17.4" height="17.2" rx="1.2" fill="#4a6494"/><path d="M1035.6 618v6.2" stroke="#eef0f4" stroke-width="1.2"/><rect x="1035.6" y="620" width="5" height="3.8" fill="#eef0f4"/><rect x="1026" y="629.2" width="5.2" height="4.4" fill="#eef0f4"/><path d="M1028.2 624.2L1031.3 621L1039.6 629.4L1036.8 632.2L1031.2 626.6V629.2H1028.2z" fill="#4a6494" stroke="#eef0f4" stroke-width="1.2" stroke-linejoin="miter"/>
<text x="1085.3" y="630.8" font-size="12.5" fill="#f4f4f4" font-family="Liberation Sans">x8</text>
<circle cx="1125.6" cy="626.5" r="14.6" fill="url(#gb)" stroke="#4b3a8a" stroke-width="1.1"/>
<circle cx="1122.2" cy="622.9" r="5.4" fill="none" stroke="#3e5a88" stroke-width="2.1"/><path d="M1126.6 627.5l5.6 5.6" stroke="#3e5a88" stroke-width="3.4" stroke-linecap="round"/>
</svg>
<!-- taskbar -->
<div id="taskbar" class="abs"></div>
<svg class="abs" style="left:0;top:0" width="1156" height="700" viewBox="0 0 1156 700">
<rect x="319" y="646" width="33" height="28" fill="#f7f7f7"/>
<path d="M11.2 656.2l5.3-0.8v5h-5.3zM17.4 655.3l6-0.9v6h-6zM11.2 661.3h5.3v5l-5.3-0.8zM17.4 661.3h6v6l-6-0.9z" fill="#111"/>
<path d="M46 655.6h8.5M46 665.8h8.5M47.2 656v9.5M53.4 656v9.5M56.9 655.5v10.6" stroke="#222" stroke-width="1" fill="none"/><circle cx="56.9" cy="658.8" r="1.1" fill="#111"/>
<ellipse cx="89" cy="659" rx="8.5" ry="5" fill="none" stroke="#e85050" stroke-width="0.9" transform="rotate(-20 89 659)"/><path d="M88 656l3 7M92 655l-3 8" stroke="#888" stroke-width="0.8"/><circle cx="90" cy="665.5" r="1.8" fill="none" stroke="#2a7ae0" stroke-width="1"/><circle cx="94" cy="664" r="1.8" fill="none" stroke="#2a7ae0" stroke-width="1"/>
<path d="M116.3 654h6.5l1 1.5h8.2v11.4h-15.7z" fill="#f8d060"/><path d="M116.3 654h6.5v2.2h-6.5z" fill="#e0a000"/><path d="M119.5 661h10v6h-2.6v-3.3h-4.8v3.3h-2.6z" fill="#2a8ae0"/>
<rect x="110" y="673" width="22.5" height="1.7" fill="#3ab4c4"/><rect x="132.5" y="673" width="6" height="1.7" fill="#9ad4dc"/>
<rect x="152" y="652.8" width="4" height="4" fill="#8a5a30"/>
<rect x="156" y="652.8" width="4" height="4" fill="#ffee00"/>
<rect x="160" y="652.8" width="4" height="4" fill="#e08030"/>
<rect x="164" y="652.8" width="4" height="4" fill="#e02040"/>
<rect x="152" y="656.8" width="4" height="4" fill="#ffee00"/>
<rect x="156" y="656.8" width="4" height="4" fill="#e08030"/>
<rect x="160" y="656.8" width="4" height="4" fill="#e02040"/>
<rect x="164" y="656.8" width="4" height="4" fill="#8a5a30"/>
<rect x="152" y="660.8" width="4" height="4" fill="#e08030"/>
<rect x="156" y="660.8" width="4" height="4" fill="#e02040"/>
<rect x="160" y="660.8" width="4" height="4" fill="#8a5a30"/>
<rect x="164" y="660.8" width="4" height="4" fill="#ffee00"/>
<rect x="152" y="664.8" width="4" height="4" fill="#e02040"/>
<rect x="156" y="664.8" width="4" height="4" fill="#8a5a30"/>
<rect x="160" y="664.8" width="4" height="4" fill="#ffee00"/>
<rect x="164" y="664.8" width="4" height="4" fill="#e08030"/>
<rect x="152" y="652.8" width="16" height="16" fill="none" stroke="#3a2020" stroke-width="0.7"/>
<defs><radialGradient id="ig2" cx="0.4" cy="0.3" r="0.7"><stop offset="0" stop-color="#d8d4f4"/><stop offset="1" stop-color="#7a74b0"/></radialGradient></defs><circle cx="195.1" cy="660.2" r="7.8" fill="url(#ig2)"/>
<text x="195.5" y="662.5" font-size="7" font-style="italic" font-weight="bold" fill="#111" text-anchor="middle" font-family="Liberation Serif" textLength="14" lengthAdjust="spacingAndGlyphs">Infra</text><path d="M188 666.3h14" stroke="#222" stroke-width="1.2"/>
<circle cx="230.5" cy="660.5" r="8.2" fill="#e53935"/><path d="M230.5 660.5L237.6 656.4A8.2 8.2 0 0 1 230.5 668.7z" fill="#fbc02d"/><path d="M230.5 660.5L230.5 668.7A8.2 8.2 0 0 1 223.4 656.4z" fill="#43a047"/><circle cx="230.5" cy="660.5" r="3.8" fill="#fff"/><circle cx="230.5" cy="660.5" r="2.9" fill="#1e88e5"/>
<rect x="216" y="673" width="29" height="1.7" fill="#1ab0c0"/>
<defs><linearGradient id="eg" x1="0" y1="0" x2="1" y2="0.3"><stop offset="0" stop-color="#1aa0e0"/><stop offset="1" stop-color="#60d860"/></linearGradient></defs>
<circle cx="265.6" cy="660.3" r="8.8" fill="#1478c8"/><path d="M256.9 659.5A8.8 8.8 0 0 1 274.4 660.5C274.4 663.5 272 665 269.5 665C267 665 265.5 663.5 265.5 662C265.5 660 268.5 659 268.5 657.5C268.5 655.5 265.5 654.5 262.5 655.3C259.5 656 257.5 657.5 256.9 659.5z" fill="url(#eg)"/><path d="M265.5 662C265.5 664 267.5 665.5 270 665.5C272 665.5 273.5 664.5 274 663.5C273 666.5 270 669 266 669C262.5 669 260.5 667 260.5 664.5C260.5 662 262.5 660.5 265.5 662z" fill="#0c4a98"/><ellipse cx="269.3" cy="661.2" rx="3.6" ry="2.2" fill="#eeeeee"/>
<rect x="251.5" y="673" width="28.5" height="1.7" fill="#1ab0c0"/>
<rect x="293.5" y="653.5" width="14.5" height="14" rx="1" fill="#a8d0f0"/><circle cx="300.5" cy="660.5" r="5.5" fill="#f08020"/><path d="M298.8 657.5l4.5 3l-4.5 3z" fill="#fff"/>
<rect x="286.7" y="673" width="29.3" height="1.7" fill="#1ab0c0"/>
<svg x="328.1" y="651.9" width="17" height="17" viewBox="0 0 17 17"><defs><linearGradient id="sg" x1="0" y1="0" x2="1" y2="1"><stop offset="0" stop-color="#58b8f4"/><stop offset="0.5" stop-color="#2a78d0"/><stop offset="1" stop-color="#0a2a90"/></linearGradient></defs><rect x="0" y="0" width="17" height="17" rx="2" fill="url(#sg)"/><path d="M0 4.1C2 3.8 4 1 5.8 1.7S8 7.8 9 7.8S12 5.3 13.6 5.2S17 4.8 17 4.8M0 10.5C1.5 10 2.5 8.3 3.4 8.5S5.5 14.8 6.8 14.8S9.5 12 11.4 11.9S17 11.4 17 11.4" fill="none" stroke="#fff" stroke-width="1.4"/></svg>
<rect x="351.6" y="646" width="1" height="28" fill="#d0d0d0"/>
<rect x="319.2" y="673" width="34.6" height="1.7" fill="#1ab0c0"/>
<circle cx="923.5" cy="660.5" r="7.2" fill="#f5a010"/><path d="M919 666h10a3 3 0 0 0 0-6a4 4 0 0 0-7-1a3 3 0 0 0-3 7z" fill="#fff" opacity="0.9"/><circle cx="930" cy="666.5" r="2.2" fill="#e02030"/>
<text x="938.5" y="665.6" font-size="10.5" fill="#222" font-family="Liberation Sans" textLength="20.8" lengthAdjust="spacingAndGlyphs">19°C</text>
<text x="966.4" y="665.6" font-size="10.5" fill="#222" font-family="Liberation Sans" textLength="58.7" lengthAdjust="spacingAndGlyphs">Mostly sunny</text>
<path d="M1036.5 662l4.5-4.5l4.5 4.5" fill="none" stroke="#333" stroke-width="1"/>
<path d="M1055.5 656.5h6v8h-6zM1061.5 659l2-1v5l-2-1M1056 655h5M1056 666h5" fill="none" stroke="#333" stroke-width="1"/>
<text x="1092.3" y="657.3" font-size="10" fill="#222" text-anchor="middle" font-family="Liberation Sans" textLength="19.3" lengthAdjust="spacingAndGlyphs">17:24</text>
<text x="1092.3" y="670" font-size="10" fill="#222" text-anchor="middle" font-family="Liberation Sans" textLength="41.4" lengthAdjust="spacingAndGlyphs">01/09/2022</text>
<path d="M1126 655.5h13v9h-9l-4 3z" fill="#111"/><path d="M1128 658h9M1128 660.5h9M1128 663h6" stroke="#eee" stroke-width="0.8"/><circle cx="1137.5" cy="666.5" r="5" fill="#d8d8d8" stroke="#888" stroke-width="0.8"/>
<text x="1137.5" y="669.8" font-size="8" fill="#222" text-anchor="middle" font-family="Liberation Sans">1</text>
<rect x="1152.3" y="646" width="1" height="28" fill="#c8c8c8"/>
</svg>
</body></html>
